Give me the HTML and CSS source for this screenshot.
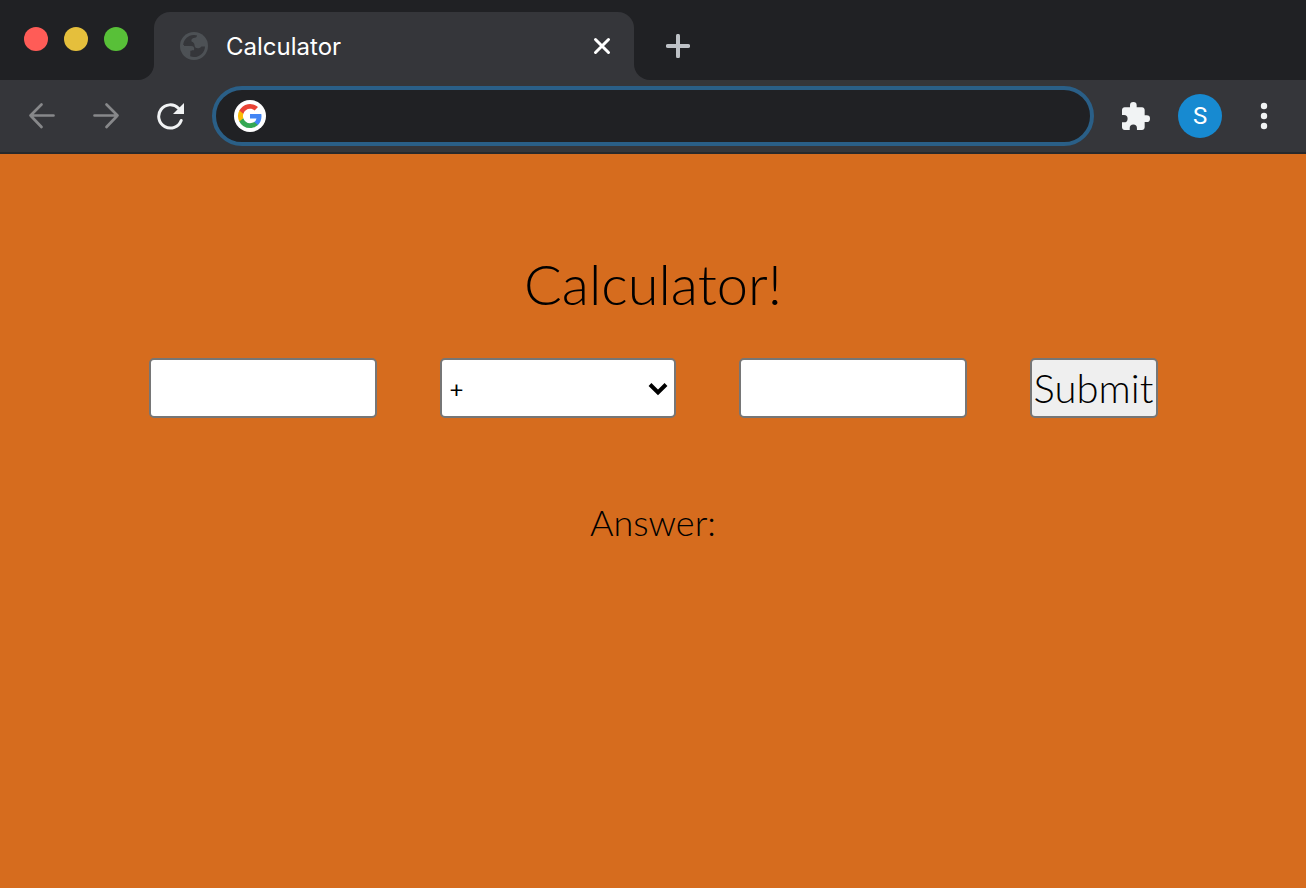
FILE: index.html
```html
<!DOCTYPE html>
<html lang="en">
<head>
<meta charset="utf-8">
<title>Calculator</title>
<link rel="stylesheet" href="styles.css">
</head>
<body>
<header class="browser">
  <div class="tab-strip">
    <div class="window-controls">
      <button class="light close" aria-label="Close window"></button>
      <button class="light minimize" aria-label="Minimize window"></button>
      <button class="light expand" aria-label="Expand window"></button>
    </div>
    <div class="tab-well">
      <div class="tab">
        <svg class="globe" viewBox="0 0 28 28" aria-hidden="true">
          <circle cx="14" cy="14" r="14" fill="#4d5155"/>
          <path d="M3.200 12.500C4 7.200 8.200 3.200 13.600 3c1.400 0 2.700.200 3.400.600-.100 1.300-.700 2-2 2.200-2.600.300-3.600 1.200-3.600 2.700 0 1.200.700 1.700 1.800 1.700v1.200c0 1-.800 1.600-1.800 1.600H3.200z" fill="#35363a"/>
          <path d="M4 14h7.500c1.700 0 2.600.900 2.600 2.400v1.800h-2.600c-.900 0-1.300.5-1.300 1.300v4.800c1.200.4 2.400.7 3.800.7 6 0 10.800-4.500 11-10.600h-3.600c-.8 1.200-1.900 1.800-3.500 1.800-2.200 0-3.400-1.300-3.400-3.300 0-1.600-.8-2.500-2.300-2.500H9L4 12z" fill="#35363a"/>
          <path d="M3 14.200h6.500c1.700 0 2.500.800 2.500 2.300v1.900h-1.800v4.300C6.200 21.200 3.400 18 3 14.200z" fill="#4d5155"/>
        </svg>
        <span class="tab-title">Calculator</span>
        <button class="icon-button" aria-label="Close tab">
          <svg width="20" height="20" viewBox="0 0 20 20"><path d="M3.500 3.500l13 13M16.500 3.500l-13 13" stroke="#fff" stroke-width="3" stroke-linecap="round"/></svg>
        </button>
      </div>
    </div>
    <div class="strip-rest">
      <button class="icon-button" aria-label="New tab">
        <svg width="24" height="24" viewBox="0 0 24 24"><path d="M12 1.800v20.400M1.800 12h20.400" stroke="#bdc1c6" stroke-width="4" stroke-linecap="round"/></svg>
      </button>
    </div>
  </div>
  <div class="toolbar">
    <div class="nav">
      <button class="icon-button" aria-label="Back">
        <svg width="28" height="28" viewBox="0 0 28 28" fill="none" stroke="#87888a" stroke-width="2.700" stroke-linecap="round" stroke-linejoin="round"><path d="M25.500 13.500H2.500M13.500 2.500L2.500 13.500l11 11.500"/></svg>
      </button>
      <button class="icon-button" aria-label="Forward">
        <svg width="28" height="28" viewBox="0 0 28 28" fill="none" stroke="#87888a" stroke-width="2.700" stroke-linecap="round" stroke-linejoin="round"><path d="M2.500 13.500h23M14.500 2.500l11 11-11 11.500"/></svg>
      </button>
      <button class="icon-button" aria-label="Reload">
        <svg width="28" height="28" viewBox="0 0 28 28"><path d="M25.200 18.500A11.600 11.600 0 1 1 22.500 6.200" fill="none" stroke="#f1f3f4" stroke-width="3" stroke-linecap="round"/><path d="M28 1v11H17z" fill="#f1f3f4"/></svg>
      </button>
    </div>
    <div class="address">
      <svg class="google" viewBox="0 0 32 32" aria-hidden="true">
        <circle cx="16" cy="16" r="16" fill="#fff"/>
        <g transform="translate(4 4)">
          <path fill="#4285f4" d="M23.500 12.300c0-.8-.1-1.600-.2-2.300H12v4.500h6.500a5.500 5.500 0 0 1-2.400 3.600v3h3.900c2.200-2.100 3.500-5.200 3.500-8.800z"/>
          <path fill="#34a853" d="M12 24c3.200 0 6-1.100 8-2.900l-3.900-3c-1.100.7-2.500 1.200-4.100 1.200-3.100 0-5.800-2.100-6.700-5H1.300v3.100A12 12 0 0 0 12 24z"/>
          <path fill="#fbbc05" d="M5.300 14.300a7 7 0 0 1 0-4.600V6.600h-4a12 12 0 0 0 0 10.800z"/>
          <path fill="#ea4335" d="M12 4.700c1.800 0 3.400.6 4.600 1.800L20 3.100A12 12 0 0 0 1.300 6.600l4 3.100c.9-2.900 3.600-5 6.700-5z"/>
        </g>
      </svg>
      <input class="address-input" type="text" aria-label="Address and search bar">
    </div>
    <div class="actions">
      <button class="icon-button" aria-label="Extensions">
        <svg width="28" height="28" viewBox="2 1 21 21"><path fill="#f1f3f4" d="M20.500 11H19V7c0-1.100-.9-2-2-2h-4V3.500a2.500 2.500 0 0 0-5 0V5H4c-1.100 0-2 .9-2 2v3.800h1.500a2.700 2.700 0 0 1 0 5.400H2V20c0 1.100.9 2 2 2h3.800v-1.500a2.700 2.700 0 0 1 5.400 0V22H17c1.100 0 2-.9 2-2v-4h1.500a2.500 2.500 0 0 0 0-5z"/></svg>
      </button>
      <button class="avatar" aria-label="Profile S">S</button>
      <button class="icon-button" aria-label="Menu">
        <svg width="28" height="28" viewBox="0 0 28 28" fill="#f1f3f4"><circle cx="14" cy="4" r="3.200"/><circle cx="14" cy="14" r="3.200"/><circle cx="14" cy="24" r="3.200"/></svg>
      </button>
    </div>
  </div>
</header>
<main class="page">
  <h1 class="title">Calculator!</h1>
  <form class="calculator">
    <input class="field number" type="text" aria-label="First number">
    <div class="operator">
      <select class="field select" aria-label="Operator">
        <option>+</option>
        <option>-</option>
        <option>*</option>
        <option>/</option>
      </select>
      <svg class="chevron" viewBox="0 0 20 14" aria-hidden="true"><path d="M2 2.500l8 8 8-8" fill="none" stroke="#000" stroke-width="4"/></svg>
    </div>
    <input class="field number" type="text" aria-label="Second number">
    <button class="field submit" type="button">Submit</button>
  </form>
  <p class="answer">Answer:</p>
</main>
</body>
</html>
```
FILE: styles.css
```css
* {
  box-sizing: border-box;
}

body {
  display: flex;
  flex-direction: column;
  min-height: 100vh;
  margin: 0;
  background: #d66c1e;
  color: #000;
  font-family: Lato, sans-serif;
  font-weight: 300;
}

button,
input,
select {
  margin: 0;
  padding: 0;
  font: inherit;
  color: inherit;
}

svg {
  display: block;
  flex: none;
}

.browser {
  background: #35363a;
  border-bottom: 2px solid #28292b;
  font-family: Inter, sans-serif;
  font-weight: 400;
}

.tab-strip {
  display: flex;
  height: 80px;
}

.window-controls {
  display: flex;
  gap: 16px;
  width: 154px;
  padding: 27px 24px;
  background: #202124;
  border-bottom-right-radius: 16px;
}

.light {
  width: 24px;
  height: 24px;
  border: 0;
  border-radius: 50%;
}

.close {
  background: #ff5c57;
}

.minimize {
  background: #e5bf3c;
}

.expand {
  background: #58c038;
}

.tab-well {
  flex: 0 1 480px;
  padding-top: 12px;
  background: linear-gradient(#202124 50%, #35363a 50%);
}

.tab {
  display: flex;
  align-items: center;
  gap: 18px;
  height: 68px;
  padding: 0 22px 0 26px;
  background: #35363a;
  border-radius: 16px 16px 0 0;
}

.globe {
  width: 28px;
  height: 28px;
}

.tab-title {
  flex: 1;
  color: #fff;
  font-size: 24px;
}

.icon-button {
  display: flex;
  border: 0;
  background: none;
}

.strip-rest {
  display: flex;
  flex: 1;
  align-items: center;
  padding: 12px 32px 0;
  background: #202124;
  border-bottom-left-radius: 16px;
}

.toolbar {
  display: flex;
  align-items: center;
  gap: 28px;
  height: 72px;
  padding: 0 28px;
}

.nav {
  display: flex;
  gap: 36px;
}

.address {
  display: flex;
  flex: 1;
  align-items: center;
  gap: 16px;
  height: 60px;
  padding: 0 18px;
  background: #202124;
  border: 4px solid #2a5f87;
  border-radius: 30px;
}

.google {
  width: 32px;
  height: 32px;
}

.address-input {
  flex: 1;
  min-width: 0;
  border: 0;
  outline: 0;
  background: transparent;
  color: #fff;
  font-size: 24px;
}

.actions {
  display: flex;
  align-items: center;
  gap: 28px;
}

.avatar {
  width: 44px;
  height: 44px;
  border: 0;
  border-radius: 50%;
  background: #178ad1;
  color: #fff;
  font-family: Roboto, sans-serif;
  font-size: 24px;
}

.page {
  display: flex;
  flex: 1;
  flex-direction: column;
  align-items: center;
  padding-top: 94px;
}

.title {
  margin: 0 0 38px;
  font-size: 56px;
  font-weight: 300;
  line-height: 72px;
}

.calculator {
  display: flex;
  gap: 63px;
}

.field {
  height: 60px;
  border: 2px solid #767676;
  border-radius: 5px;
  background: #fff;
}

.number {
  width: 228px;
  padding: 0 8px;
  font-size: 24px;
}

.operator {
  position: relative;
}

.select {
  width: 236px;
  padding: 0 8px;
  appearance: none;
  font-size: 24px;
  font-weight: 400;
}

.chevron {
  position: absolute;
  top: 24px;
  right: 8px;
  width: 20px;
  height: 14px;
  pointer-events: none;
}

.submit {
  width: 128px;
  background: #efefef;
  font-size: 40px;
}

.answer {
  margin: 80px 0 0;
  font-size: 36px;
  line-height: 48px;
}
```
